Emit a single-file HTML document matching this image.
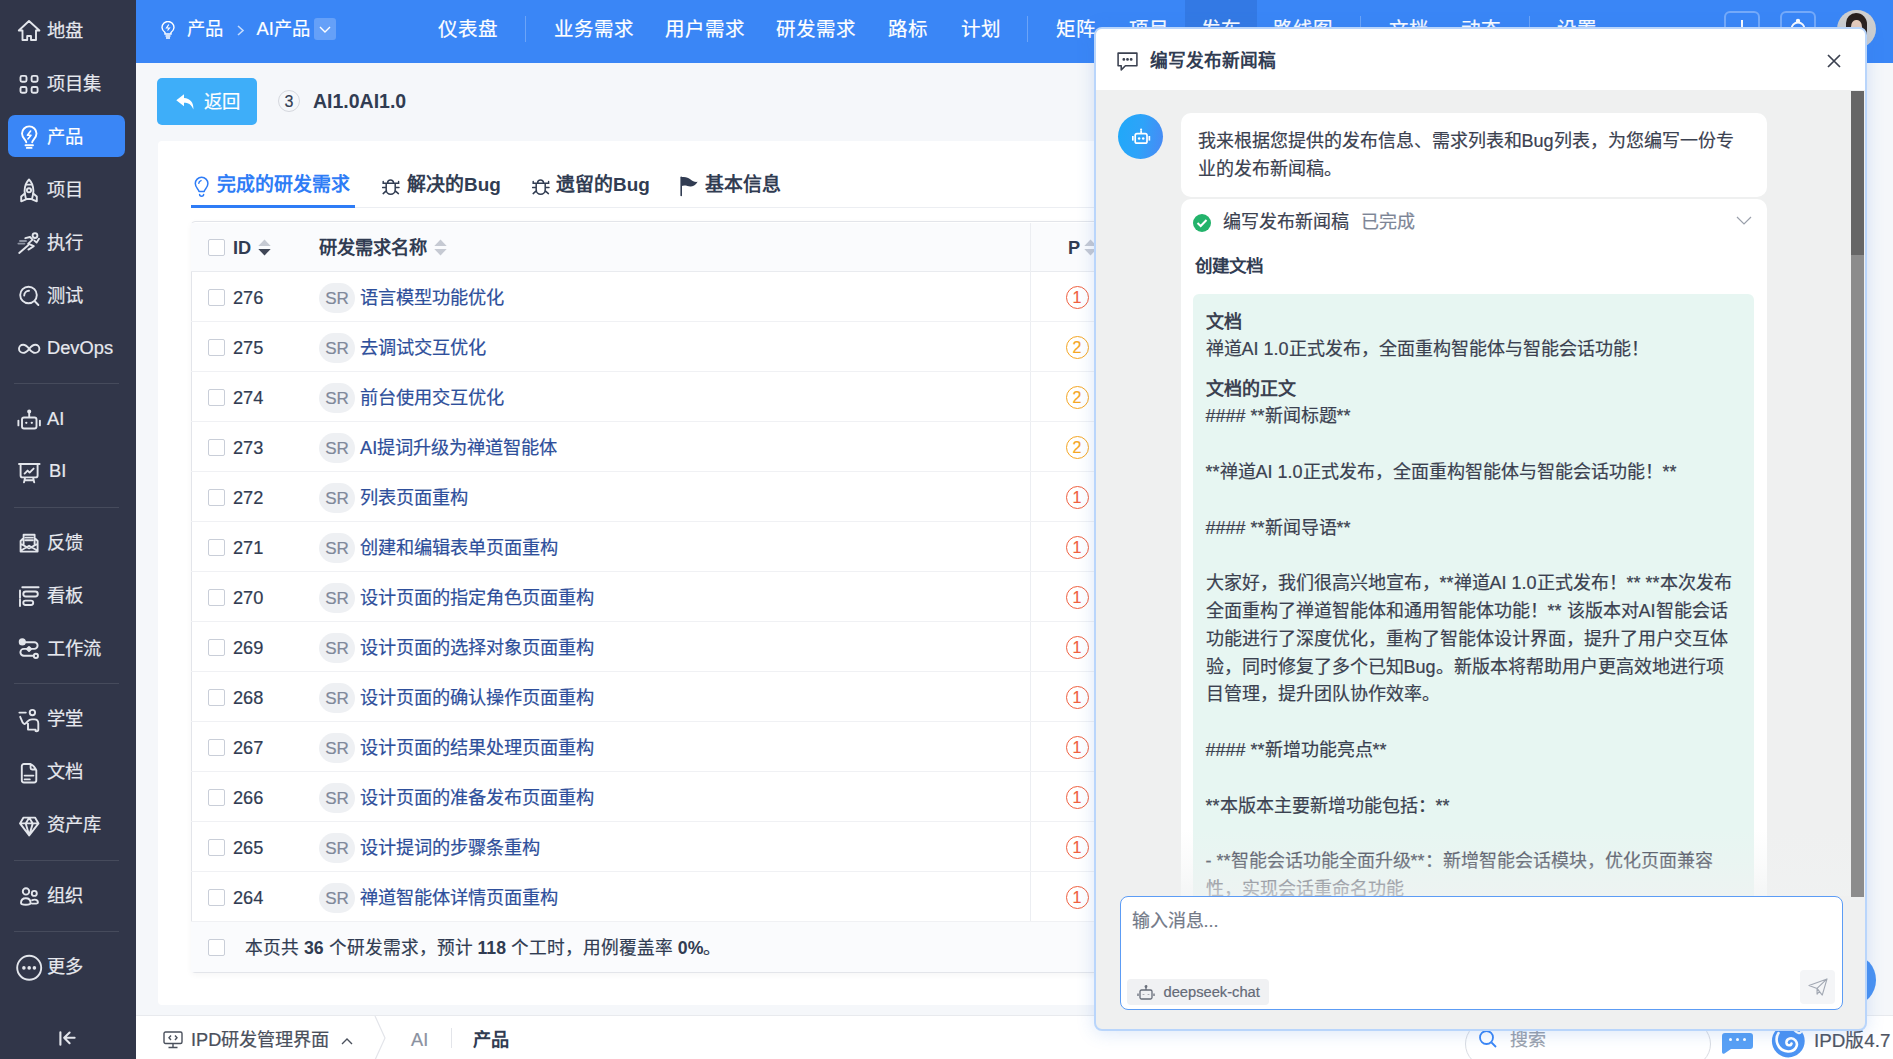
<!DOCTYPE html>
<html lang="zh-CN"><head><meta charset="utf-8">
<style>
*{box-sizing:border-box;margin:0;padding:0}
html,body{width:1893px;height:1059px;overflow:hidden}
body{font-family:"Liberation Sans",sans-serif;background:#f5f7fa;position:relative;color:#313c52;-webkit-text-stroke:0.2px currentColor}
.abs{position:absolute}
b,.tab,[style*="font-weight:bold"],[style*="font-weight:bold"] *{-webkit-text-stroke:0}
svg{display:block}
/* sidebar */
#side{position:absolute;left:0;top:0;width:136px;height:1059px;background:#313649}
.si{position:absolute;left:8px;width:117px;height:42px;color:#e6e8ee;font-size:18.3px;line-height:44px}
.si .ic{position:absolute;left:9px;top:10px;width:22px;height:22px}
.si .tx{position:absolute;left:39px;top:0}
.si.on{background:#3a86f6;border-radius:7px;color:#fff}
.sdiv{position:absolute;left:14px;width:105px;height:1px;background:#464b5c}
/* header */
#hdr{position:absolute;left:136px;top:0;width:1757px;height:63px;background:#3a86f6;color:#fff}
.nv{position:absolute;top:0;height:63px;line-height:58px;font-size:19.5px;color:#fff}
.nvd{position:absolute;top:16px;width:1px;height:26px;background:rgba(255,255,255,.25)}
/* main */
#card{position:absolute;left:158px;top:141px;width:1000px;height:864px;background:#fff;border-radius:4px}
.tab{position:absolute;top:170px;height:30px;font-size:18.9px;font-weight:bold;color:#313c52;line-height:30px}
.row{position:absolute;left:191px;width:960px;height:50px;border-bottom:1px solid #f0f1f4;font-size:18.2px;line-height:52.5px}
.cb{position:absolute;left:17px;top:17px;width:17px;height:17px;border:1px solid #c9ced8;border-radius:2px;background:#fff}
.rid{position:absolute;left:42px;color:#313c52}
.sr{position:absolute;left:128px;top:11px;width:36px;height:30px;border-radius:15px;background:#eef0f3;color:#7f889a;font-size:17px;line-height:32px;text-align:center}
.nm{position:absolute;left:169px;color:#2e4f9b}
.pri{position:absolute;left:874.5px;top:14px;width:23px;height:23px;border-radius:50%;border:1.3px solid #f0603f;color:#f0603f;font-size:16px;line-height:21px;text-align:center}
.pri.p2{border-color:#f5a623;color:#f5a623}
/* bottom bar */
#bot{position:absolute;left:136px;top:1015px;width:1757px;height:44px;background:#fff;border-top:1px solid #e8eaee}
/* chat */
#chat{position:absolute;left:1094px;top:27px;width:773px;height:1004px;border:2.5px solid #b9d5fb;border-radius:8px;background:#eff0f0;box-shadow:0 2px 18px rgba(58,120,220,.18);overflow:hidden}
#chh{position:absolute;left:-2px;top:-1px;width:772px;height:61px;background:#fff}
.md{font-size:18px;color:#3b4150;line-height:28px}
</style></head><body>

<!-- SIDEBAR -->
<div id="side">
  <div class="abs" style="left:8px;top:115px;width:117px;height:42px;background:#3a86f6;border-radius:7px"></div>
  <div class="sdiv" style="top:383px"></div>
  <div class="sdiv" style="top:507px"></div>
  <div class="sdiv" style="top:683px"></div>
  <div class="sdiv" style="top:860px"></div>
  <div class="sdiv" style="top:931px"></div>
  <svg class="abs" style="left:0;top:0" width="136" height="1059" viewBox="0 0 136 1059" fill="none" stroke="#e3e6ec" stroke-width="1.9" stroke-linecap="round" stroke-linejoin="round">
    <path d="M18.8 30.5 L29 21 L39.4 30.5 H36 V40 H31 V36 H27.2 V40 H22.5 V30.5 Z"/>
    <rect x="20.5" y="75.9" width="6" height="5.8" rx="1.5"/><rect x="31.6" y="75.9" width="6" height="5.8" rx="1.5"/><rect x="20.5" y="87" width="6" height="5.8" rx="1.5"/><rect x="31.6" y="87" width="6" height="5.8" rx="1.5"/>
    <g stroke="#fff"><path d="M26.3 142.3 C26.3 139.8 22 138.3 22 133.6 A7.25 7.25 0 1 1 36.5 133.6 C36.5 138.3 32.2 139.8 32.2 142.3"/><path d="M25.5 145.2 H33 M26.8 147.9 H31.6"/><path d="M30.6 131 L27.4 135.2 H31 L27.9 139" stroke-width="1.6"/></g>
    <path d="M29 179.5 C25.6 183 24.6 187 24.6 191 C24.6 194 25.4 196.8 26 199 H32 C32.6 196.8 33.4 194 33.4 191 C33.4 187 32.4 183 29 179.5 Z"/><path d="M25.9 184.6 H32.1"/><circle cx="29" cy="190.3" r="2.1"/><path d="M24.8 193.6 L21.2 196.6 V201.3 L26 199.3 M33.2 193.6 L36.8 196.6 V201.3 L32 199.3"/>
    <circle cx="35" cy="235.6" r="2.4"/><path d="M25.3 238.2 L30 237 L32.6 239.6 L28.2 243.6 L33.8 246.2 L28.4 249.6 M34.4 240.6 L36.6 242.6 L39 238.8 M28.2 245.2 L19.2 253"/><path d="M20 241 H26 M18.4 243.6 H24.4" stroke="#8d93a2"/>
    <circle cx="28.5" cy="295" r="8.3"/><path d="M35 301.5 L38.4 305 M24.2 295.6 A4.9 4.9 0 0 1 29 290.8"/>
    <path d="M29.2 348.8 C27 346 25.6 344.7 23.1 344.7 A4.1 4.1 0 0 0 23.1 352.9 C25.6 352.9 27 351.6 29.2 348.8 C31.4 346 32.8 344.7 35.3 344.7 A4.1 4.1 0 0 1 35.3 352.9 C32.8 352.9 31.4 351.6 29.2 348.8 Z"/>
    <rect x="22" y="417.5" width="14.5" height="11" rx="2"/><path d="M29.2 412.5 V417 M18.4 420.6 V425.4 M39.9 420.6 V425.4"/><circle cx="29.2" cy="411.5" r="1.1" fill="#e3e6ec"/><circle cx="26.3" cy="422.8" r="1.15" fill="#e3e6ec" stroke="none"/><circle cx="31.8" cy="422.8" r="1.15" fill="#e3e6ec" stroke="none"/>
    <path d="M19 464 H39.6 M20.6 464 V475.4 A2 2 0 0 0 22.6 477.4 H35.6 A2 2 0 0 0 37.6 475.4 V464 M24.6 473.6 L27.6 470.6 L29.6 472.6 L33.6 468.6 M25 478 L24 482.4 M33.2 478 L34.2 482.4 M25 480.2 H33.2"/>
    <path d="M22.6 539 L20.6 541 V551.6 H37.6 V541 L35.6 539 M23.6 545.4 V534.8 H34.6 V545.4 M25.6 537.6 H32.6 M25.6 540.3 H32.6 M21 544 L29.1 548.4 L37.2 544 M22.2 549.8 L29.1 545.8 L36 549.8"/>
    <path d="M22.3 587.3 H38.6 M20 590.5 V597.8 M20 599.4 V606"/><rect x="23.3" y="591.5" width="14.5" height="5" rx="2.5"/><rect x="23.3" y="600.6" width="9.9" height="4.4" rx="2.2"/>
    <circle cx="22.3" cy="641.9" r="2.6" fill="#e3e6ec"/><path d="M24.2 642.3 H34.3 A3.3 3.3 0 0 1 34.3 648.9 H23.8 A3.4 3.4 0 0 0 23.8 655.7 H33.6"/><circle cx="35.9" cy="655.9" r="2.1"/><path d="M29 646.9 L31.1 649 L29 651.1 L26.9 649 Z" fill="#e3e6ec"/>
    <circle cx="32.4" cy="712.6" r="2.7"/><path d="M19.4 712.6 H25.8 M20.2 716.8 L22.8 722.8 Q24.4 725 26 723.2 L27.6 721.4 Q29.4 719.4 32 719.4 H34.4 Q38.3 719.4 38.3 723.6 V729.4 Q38.3 731.2 36.5 731.2 M28 723.6 V729.6 H35.6 V731"/>
    <path d="M30.6 764 H24 A2.2 2.2 0 0 0 21.8 766.2 V780.3 A2.2 2.2 0 0 0 24 782.5 H34.1 A2.2 2.2 0 0 0 36.3 780.3 V770.4 Q34.6 766 30.6 764 Z M30.6 764.6 V768 A1.5 1.5 0 0 0 32.1 769.5 H36 M24.6 775.6 H33.4 M24.6 779.4 H29.8"/>
    <path d="M23.5 817.6 H35 L38.5 823.4 L29.2 835.4 L20 823.4 Z M20 823.4 H38.5 M29.2 817.8 L25.7 823.4 L29.2 835.2 L32.8 823.4 Z"/>
    <circle cx="26" cy="891.4" r="3.2"/><circle cx="34.3" cy="893.4" r="2.5"/><path d="M21 903 C21 900 23 898.2 25.8 898.2 C28.6 898.2 30.6 900 30.6 903 C30.6 904.3 28.6 904.7 25.8 904.7 C23 904.7 21 904.3 21 903 Z M32.2 900.2 C33 899.8 33.6 899.6 34.6 899.6 C36.6 899.6 37.9 901 37.9 902.4 C37.9 903.3 36.6 903.6 34.6 903.6 H32"/>
    <circle cx="29.2" cy="967.8" r="12"/><circle cx="23.9" cy="967.9" r="1.8" fill="#e3e6ec" stroke="none"/><circle cx="29.2" cy="967.9" r="1.8" fill="#e3e6ec" stroke="none"/><circle cx="34.4" cy="967.9" r="1.8" fill="#e3e6ec" stroke="none"/>
    <path d="M60.4 1032.2 V1044.8 M69.6 1032.6 L64.2 1037.8 L69.6 1043.2 M64.6 1037.8 H74.6" stroke-width="2.1"/>
  </svg>
  <div class="si" style="top:9px"><span class="tx">地盘</span></div>
  <div class="si" style="top:62px"><span class="tx">项目集</span></div>
  <div class="si on" style="top:115px;background:none"><span class="tx">产品</span></div>
  <div class="si" style="top:168px"><span class="tx">项目</span></div>
  <div class="si" style="top:221px"><span class="tx">执行</span></div>
  <div class="si" style="top:274px"><span class="tx">测试</span></div>
  <div class="si" style="top:326px"><span class="tx">DevOps</span></div>
  <div class="si" style="top:397px"><span class="tx">AI</span></div>
  <div class="si" style="top:449px"><span class="tx" style="left:41px">BI</span></div>
  <div class="si" style="top:521px"><span class="tx">反馈</span></div>
  <div class="si" style="top:574px"><span class="tx">看板</span></div>
  <div class="si" style="top:627px"><span class="tx">工作流</span></div>
  <div class="si" style="top:697px"><span class="tx">学堂</span></div>
  <div class="si" style="top:750px"><span class="tx">文档</span></div>
  <div class="si" style="top:803px"><span class="tx">资产库</span></div>
  <div class="si" style="top:874px"><span class="tx">组织</span></div>
  <div class="si" style="top:945px"><span class="tx">更多</span></div>
</div>

<!-- HEADER -->
<div id="hdr">
  <svg class="abs" style="left:25px;top:21px" width="14" height="18" viewBox="0 0 14 18" fill="none" stroke="#fff" stroke-width="1.4"><path d="M4 11.5 C2 10 1 8.5 1 6.5 A6 6 0 0 1 13 6.5 C13 8.5 12 10 10 11.5 V13 H4 Z M4.5 15 H9.5 M5 17 H9"/><path d="M7.8 3.5 L5.5 7 H8.5 L6.5 9.5" stroke-width="1.2"/></svg>
  <div class="nv" style="left:50.5px;font-size:18.3px">产品</div>
  <svg class="abs" style="left:100px;top:25px" width="9" height="11" viewBox="0 0 9 11" fill="none" stroke="rgba(255,255,255,.7)" stroke-width="1.6"><path d="M2 1 L7 5.5 L2 10"/></svg>
  <div class="nv" style="left:120.5px;font-size:18.3px">AI产品</div>
  <div class="abs" style="left:178px;top:18px;width:22px;height:22px;background:rgba(255,255,255,.22);border-radius:3px"><svg class="abs" style="left:5px;top:8px" width="12" height="7" viewBox="0 0 12 7" fill="none" stroke="#fff" stroke-width="1.4"><path d="M1 1 L6 6 L11 1"/></svg></div>

  <div class="nv" style="left:302px">仪表盘</div>
  <div class="nvd" style="left:389px"></div>
  <div class="nv" style="left:418px">业务需求</div>
  <div class="nv" style="left:529px">用户需求</div>
  <div class="nv" style="left:640px">研发需求</div>
  <div class="nv" style="left:752px">路标</div>
  <div class="nv" style="left:825px">计划</div>
  <div class="nvd" style="left:891px"></div>
  <div class="nv" style="left:920px">矩阵</div>
  <div class="nv" style="left:992.5px">项目</div>
  <div class="abs" style="left:1049px;top:0;width:72px;height:63px;background:#3379e4"></div>
  <div class="nv" style="left:1065px">发布</div>
  <div class="nv" style="left:1137px">路线图</div>
  <div class="nvd" style="left:1224px"></div>
  <div class="nv" style="left:1252.5px">文档</div>
  <div class="nv" style="left:1325px">动态</div>
  <div class="nvd" style="left:1392.5px"></div>
  <div class="nv" style="left:1421px">设置</div>
  <div class="abs" style="left:1588px;top:11px;width:36px;height:38px;border:2px solid rgba(255,255,255,.3);border-radius:6px"><div class="abs" style="left:15px;top:7px;width:2.2px;height:18px;background:#fff"></div><div class="abs" style="left:7px;top:15px;width:18px;height:2.2px;background:#fff"></div></div>
  <div class="abs" style="left:1644px;top:11px;width:36px;height:38px;border:2px solid rgba(255,255,255,.3);border-radius:6px"><svg class="abs" style="left:6px;top:5px" width="20" height="24" viewBox="0 0 20 24" fill="none" stroke="#fff" stroke-width="2"><circle cx="10" cy="3" r="1.2" fill="#fff"/><path d="M3.5 17 V11 A6.5 6.5 0 0 1 16.5 11 V17 M1.5 17.5 H18.5 M8 21 H12"/></svg></div>
  <div class="abs" style="left:1701px;top:9.5px;width:38.5px;height:38.5px;border-radius:50%;background:#cfcfcf;overflow:hidden">
    <div class="abs" style="left:9px;top:3px;width:21px;height:40px;border-radius:10px 11px 2px 2px;background:#2a201c"></div>
    <div class="abs" style="left:14px;top:10px;width:11px;height:15px;border-radius:45% 45% 50% 50%;background:#e9cdbb"></div>
    <div class="abs" style="left:13px;top:23px;width:13px;height:20px;background:#e9cdbb;border-radius:3px"></div>
  </div>
</div>

<!-- MAIN -->
<div class="abs" style="left:157px;top:78px;width:100px;height:47px;background:#3eaef9;border-radius:5px">
  <svg class="abs" style="left:19px;top:16px" width="18" height="16" viewBox="0 0 18 16" fill="#fff"><path d="M8 0.3 L0.3 6.3 L8 12.3 V8.8 C12 8.8 15.3 10 17.4 15.6 C17.8 8.6 14 4.3 8 4.1 Z"/></svg>
  <div class="abs" style="left:46.5px;top:0;line-height:47px;font-size:18.3px;color:#fff">返回</div>
</div>
<div class="abs" style="left:278px;top:90px;width:22px;height:22px;border:1px solid #d5d8de;border-radius:50%;font-size:16px;line-height:21px;text-align:center;color:#313c52">3</div>
<div class="abs" style="left:313px;top:88px;font-size:19.5px;font-weight:bold;line-height:26px;color:#313c52">AI1.0AI1.0</div>

<div id="card"></div>
<div class="abs" style="left:191px;top:207px;width:910px;height:1px;background:#eceef2"></div>
<div class="abs" style="left:191px;top:205px;width:164px;height:3px;background:#2e7cf6"></div>
<div class="tab" style="left:193px;color:#2e7cf6"><svg class="abs" style="left:-1px;top:0" width="20" height="30" viewBox="192 170 20 30" fill="none" stroke="#2e7cf6" stroke-width="1.5" stroke-linecap="round" stroke-linejoin="round"><path d="M199 191.6 C199 189.4 195.3 188 195.3 183.6 A6.3 6.3 0 1 1 207.9 183.6 C207.9 188 204.2 189.4 204.2 191.6 Z M199.6 194.6 A2 1.6 0 0 0 203.6 194.6 M198.8 183.3 A3 3 0 0 1 201 180.6"/></svg><span style="position:absolute;left:24px;white-space:nowrap">完成的研发需求</span></div>
<div class="tab" style="left:380px"><svg class="abs" style="left:2px;top:0" width="22" height="30" viewBox="382 170 22 30" fill="none" stroke="#313c52" stroke-width="1.5" stroke-linecap="round"><path d="M387.6 183 A3 3 0 0 1 393.6 183 M383.2 181.6 V183.3 H398.6 V181.6 M386.2 183.3 V189.8 A4.5 4.5 0 0 0 395.2 189.8 V183.3 M382.6 187.5 H386.2 M395.2 187.5 H399 M386.4 190.6 L383.2 193.6 M395 190.6 L398.4 193.6"/></svg><span style="position:absolute;left:27px;white-space:nowrap">解决的Bug</span></div>
<div class="tab" style="left:529px"><svg class="abs" style="left:2.5px;top:0" width="22" height="30" viewBox="382 170 22 30" fill="none" stroke="#313c52" stroke-width="1.5" stroke-linecap="round"><path d="M387.6 183 A3 3 0 0 1 393.6 183 M383.2 181.6 V183.3 H398.6 V181.6 M386.2 183.3 V189.8 A4.5 4.5 0 0 0 395.2 189.8 V183.3 M382.6 187.5 H386.2 M395.2 187.5 H399 M386.4 190.6 L383.2 193.6 M395 190.6 L398.4 193.6"/></svg><span style="position:absolute;left:27px;white-space:nowrap">遗留的Bug</span></div>
<div class="tab" style="left:679px"><svg class="abs" style="left:-2px;top:0" width="22" height="30" viewBox="677 170 22 30"><path d="M681.2 177.4 V195.4" stroke="#313c52" stroke-width="1.6" stroke-linecap="round"/><path d="M681 177.3 C685 176.4 688 177.4 690.6 179.4 C692.6 181.2 694.8 182.2 697.6 181.8 C696.2 184.6 693.6 186.9 690.2 186.5 C687.4 186.1 684.8 184.6 681 186.2 Z" fill="#313c52"/></svg><span style="position:absolute;left:26px;white-space:nowrap">基本信息</span></div>

<!-- table -->
<div class="abs" style="left:191px;top:221px;width:960px;height:752px;border:1px solid #e3e5ea;border-radius:4px;background:#fff;box-shadow:0 2px 6px rgba(0,0,0,.04)"></div>
<div class="row" style="top:223px;height:49px;left:191px;line-height:50px;background:#fafbfd;font-weight:bold;border-bottom:1px solid #e9ebef">
  <div class="cb" style="top:16px"></div>
  <div class="rid" style="left:42px">ID</div>
  <svg class="abs" style="left:66.5px;top:16px" width="13" height="17" viewBox="0 0 13 17"><path d="M0.3 7 L6.5 0.5 L12.7 7 Z" fill="#c6cad3"/><path d="M0.3 10 L6.5 16.5 L12.7 10 Z" fill="#3f4656"/></svg>
  <div class="rid" style="left:128px">研发需求名称</div>
  <svg class="abs" style="left:243px;top:16px" width="13" height="17" viewBox="0 0 13 17"><path d="M0.3 7 L6.5 0.5 L12.7 7 Z" fill="#c6cad3"/><path d="M0.3 10 L6.5 16.5 L12.7 10 Z" fill="#c6cad3"/></svg>
  <div class="rid" style="left:877px">P</div>
  <svg class="abs" style="left:893px;top:16px" width="13" height="17" viewBox="0 0 13 17"><path d="M0.3 7 L6.5 0.5 L12.7 7 Z" fill="#c6cad3"/><path d="M0.3 10 L6.5 16.5 L12.7 10 Z" fill="#c6cad3"/></svg>
</div>
<div class="abs" style="left:1030px;top:223px;width:1px;height:699px;background:#eceef2"></div>
<div class="row" style="top:272px"><div class="cb"></div><div class="rid">276</div><div class="sr">SR</div><div class="nm">语言模型功能优化</div><div class="pri">1</div></div>
<div class="row" style="top:322px"><div class="cb"></div><div class="rid">275</div><div class="sr">SR</div><div class="nm">去调试交互优化</div><div class="pri p2">2</div></div>
<div class="row" style="top:372px"><div class="cb"></div><div class="rid">274</div><div class="sr">SR</div><div class="nm">前台使用交互优化</div><div class="pri p2">2</div></div>
<div class="row" style="top:422px"><div class="cb"></div><div class="rid">273</div><div class="sr">SR</div><div class="nm">AI提词升级为禅道智能体</div><div class="pri p2">2</div></div>
<div class="row" style="top:472px"><div class="cb"></div><div class="rid">272</div><div class="sr">SR</div><div class="nm">列表页面重构</div><div class="pri">1</div></div>
<div class="row" style="top:522px"><div class="cb"></div><div class="rid">271</div><div class="sr">SR</div><div class="nm">创建和编辑表单页面重构</div><div class="pri">1</div></div>
<div class="row" style="top:572px"><div class="cb"></div><div class="rid">270</div><div class="sr">SR</div><div class="nm">设计页面的指定角色页面重构</div><div class="pri">1</div></div>
<div class="row" style="top:622px"><div class="cb"></div><div class="rid">269</div><div class="sr">SR</div><div class="nm">设计页面的选择对象页面重构</div><div class="pri">1</div></div>
<div class="row" style="top:672px"><div class="cb"></div><div class="rid">268</div><div class="sr">SR</div><div class="nm">设计页面的确认操作页面重构</div><div class="pri">1</div></div>
<div class="row" style="top:722px"><div class="cb"></div><div class="rid">267</div><div class="sr">SR</div><div class="nm">设计页面的结果处理页面重构</div><div class="pri">1</div></div>
<div class="row" style="top:772px"><div class="cb"></div><div class="rid">266</div><div class="sr">SR</div><div class="nm">设计页面的准备发布页面重构</div><div class="pri">1</div></div>
<div class="row" style="top:822px"><div class="cb"></div><div class="rid">265</div><div class="sr">SR</div><div class="nm">设计提词的步骤条重构</div><div class="pri">1</div></div>
<div class="row" style="top:872px"><div class="cb"></div><div class="rid">264</div><div class="sr">SR</div><div class="nm">禅道智能体详情页面重构</div><div class="pri">1</div></div>

<div class="row" style="top:922px;border-bottom:none;background:#fafbfd">
  <div class="cb"></div>
  <div class="abs" style="left:54px;font-size:17.7px;white-space:nowrap">本页共 <b>36</b> 个研发需求，预计 <b>118</b> 个工时，用例覆盖率 <b>0%</b>。</div>
</div>

<!-- BOTTOM -->
<div id="bot">
  <svg class="abs" style="left:27px;top:15px" width="20" height="18" viewBox="0 0 20 18" fill="none" stroke="#4a505c" stroke-width="1.4"><rect x="1" y="1" width="18" height="11.5" rx="1.5"/><path d="M10 12.5 V16.5 M5.5 16.5 H14.5 M8 4.5 L6 6.8 L8 9 M12 4.5 L14 6.8 L12 9"/></svg>
  <div class="abs" style="left:55px;top:2px;line-height:44px;font-size:18.2px;color:#4a505c;white-space:nowrap">IPD研发管理界面</div>
  <svg class="abs" style="left:205px;top:21px" width="12" height="8" viewBox="0 0 12 8" fill="none" stroke="#4a505c" stroke-width="1.4"><path d="M1 7 L6 2 L11 7"/></svg>
  <svg class="abs" style="left:237px;top:0" width="14" height="44" viewBox="0 0 14 44" fill="none" stroke="#e3e5ea" stroke-width="1.2"><path d="M2 0 L12 22 L2 44"/></svg>
  <div class="abs" style="left:275px;top:2px;line-height:44px;font-size:18.2px;color:#8a91a0">AI</div>
  <div class="abs" style="left:315px;top:12px;width:1px;height:20px;background:#e3e5ea"></div>
  <div class="abs" style="left:337px;top:2px;line-height:44px;font-size:18.2px;font-weight:bold;color:#313c52">产品</div>
  <div class="abs" style="left:1329px;top:5px;width:246px;height:46px;border:1px solid #d9dce2;border-radius:23px;background:#fff"></div>
  <svg class="abs" style="left:1342px;top:13px" width="20" height="20" viewBox="0 0 20 20" fill="none" stroke="#3a86f6" stroke-width="1.8"><circle cx="8.5" cy="8.5" r="6.5"/><path d="M13.5 13.5 L18 18"/></svg>
  <div class="abs" style="left:1374px;top:0;line-height:48px;font-size:18px;color:#9aa1ad">搜索</div>
  <svg class="abs" style="left:1585px;top:16px" width="33" height="24" viewBox="0 0 33 24"><path d="M4 1 H29 A3 3 0 0 1 32 4 V14 A3 3 0 0 1 29 17 H10 L3.5 21.5 Q1 22.5 1 20 V4 A3 3 0 0 1 4 1 Z" fill="#58a0f5"/><circle cx="9.5" cy="7.5" r="1.5" fill="#fff"/><circle cx="16.5" cy="7.5" r="1.5" fill="#fff"/><circle cx="23.5" cy="7.5" r="1.5" fill="#fff"/></svg>
  <svg class="abs" style="left:1635px;top:8px" width="34" height="36" viewBox="0 0 34 36"><circle cx="17.3" cy="17" r="16.4" fill="#4d94f3"/><path d="M7.5 9 C3.5 15 6 27 17 27.5 C24.5 27.8 28 21 24.5 16.5 C21.5 12.8 15 14 15.5 19 C16 22 20 22 20.5 19.5" fill="none" stroke="#fff" stroke-width="2.6" stroke-linecap="round"/><path d="M23 6 C26 9 29 10 30 8" fill="none" stroke="#fff" stroke-width="2.2" stroke-linecap="round"/></svg>
  <div class="abs" style="left:1678px;top:0;line-height:49px;font-size:18.8px;color:#4f5562;white-space:nowrap">IPD版4.7</div>
</div>

<!-- floating ai button behind chat -->
<div class="abs" style="left:1830px;top:955px;width:46px;height:50px;border-radius:50%;background:#4a92f2"></div>

<!-- CHAT -->
<div id="chat"><div class="abs" style="left:1.5px;top:1px;width:770px;height:1000px">
  <div id="chh">
    <svg class="abs" style="left:20px;top:21.5px" width="23" height="21" viewBox="0 0 22 20" fill="none" stroke="#3b4150" stroke-width="1.5" stroke-linejoin="round"><path d="M2 2 H20 V14 H9 L5 18 V14 H2 Z"/><circle cx="7.5" cy="8" r=".6" fill="#3b4150"/><circle cx="11" cy="8" r=".6" fill="#3b4150"/><circle cx="14.5" cy="8" r=".6" fill="#3b4150"/></svg>
    <div class="abs" style="left:54px;top:17px;font-size:17.7px;font-weight:bold;line-height:30px;color:#313c52">编写发布新闻稿</div>
    <svg class="abs" style="left:730px;top:24px" width="16" height="16" viewBox="0 0 16 16" fill="none" stroke="#3b4150" stroke-width="1.7"><path d="M2 2 L14 14 M14 2 L2 14"/></svg>
  </div>
  <!-- scrollbar -->
  <div class="abs" style="left:753px;top:61px;width:13px;height:806px;background:#8c8c8c"></div>
  <div class="abs" style="left:753px;top:61px;width:13px;height:164px;background:#666"></div>
  <!-- avatar -->
  <div class="abs" style="left:20px;top:83.5px;width:45px;height:45px;border-radius:50%;background:linear-gradient(100deg,#1fa9f9 0%,#2ea3f9 50%,#4a88f4 100%)">
    <svg class="abs" style="left:7px;top:5.5px" width="32" height="32" viewBox="1125 120 32 32" fill="none" stroke="#fff" stroke-width="1.7"><rect x="1135.2" y="134.6" width="11.8" height="9.6" rx="1.8"/><path d="M1141.1 134.6 V131.4"/><circle cx="1141.1" cy="130.6" r="1.1" fill="#fff" stroke="none"/><rect x="1132" y="137" width="1.7" height="4.6" fill="#fff" stroke="none"/><rect x="1148.5" y="137" width="1.7" height="4.6" fill="#fff" stroke="none"/><circle cx="1139.1" cy="139.4" r="1.25" fill="#fff" stroke="none"/><circle cx="1143.2" cy="139.4" r="1.25" fill="#fff" stroke="none"/></svg>
  </div>
  <!-- bubble -->
  <div class="abs" style="left:83px;top:83px;width:586px;height:84px;background:#fff;border-radius:10px"></div>
  <div class="abs md" style="left:100px;top:97px;width:548px">我来根据您提供的发布信息、需求列表和Bug列表，为您编写一份专业的发布新闻稿。</div>
  <!-- card -->
  <div class="abs" style="left:83px;top:169px;width:586px;height:720px;background:#fff;border-radius:10px"></div>
  <svg class="abs" style="left:94px;top:182.5px" width="20" height="20" viewBox="0 0 20 20"><circle cx="10" cy="10" r="9" fill="#23b36b"/><path d="M5.5 10 L8.7 13 L14.5 7" fill="none" stroke="#fff" stroke-width="2"/></svg>
  <div class="abs" style="left:125px;top:178px;font-size:18px;line-height:28px;color:#3b4150">编写发布新闻稿</div>
  <div class="abs" style="left:263.5px;top:178px;font-size:18px;line-height:28px;color:#7d8596">已完成</div>
  <svg class="abs" style="left:638px;top:186px" width="16" height="10" viewBox="0 0 16 10" fill="none" stroke="#9aa0ab" stroke-width="1.2"><path d="M1 1 L8 8 L15 1"/></svg>
  <div class="abs" style="left:97px;top:222px;font-size:17.5px;font-weight:bold;line-height:28px;color:#313c52">创建文档</div>
  <div class="abs" style="left:95px;top:264px;width:561px;height:620px;background:#e7f6f2;border-radius:6px"></div>
  <div class="abs md" style="left:108px;top:278.5px;width:534px;line-height:27.8px">
    <div style="font-weight:bold">文档</div>
    <div>禅道AI 1.0正式发布，全面重构智能体与智能会话功能！</div>
    <div style="font-weight:bold;margin-top:11.5px">文档的正文</div>
    <div>#### **新闻标题**</div>
    <div>&nbsp;</div>
    <div>**禅道AI 1.0正式发布，全面重构智能体与智能会话功能！**</div>
    <div>&nbsp;</div>
    <div>#### **新闻导语**</div>
    <div>&nbsp;</div>
    <div>大家好，我们很高兴地宣布，**禅道AI 1.0正式发布！** **本次发布全面重构了禅道智能体和通用智能体功能！** 该版本对AI智能会话功能进行了深度优化，重构了智能体设计界面，提升了用户交互体验，同时修复了多个已知Bug。新版本将帮助用户更高效地进行项目管理，提升团队协作效率。</div>
    <div>&nbsp;</div>
    <div>#### **新增功能亮点**</div>
    <div>&nbsp;</div>
    <div>**本版本主要新增功能包括：**</div>
    <div>&nbsp;</div>
    <div>- **智能会话功能全面升级**：新增智能会话模块，优化页面兼容性，实现会话重命名功能</div>
  </div>
  <!-- fade -->
  <div class="abs" style="left:82px;top:800px;width:670px;height:66px;background:linear-gradient(rgba(240,242,242,0),rgba(240,242,242,.3) 50%,rgba(240,242,242,.72))"></div>
  <!-- input -->
  <div class="abs" style="left:22px;top:866px;width:723px;height:113.5px;background:#fff;border:1.5px solid #5c9cf5;border-radius:8px">
    <div class="abs" style="left:11px;top:10px;font-size:18px;line-height:28px;color:#737a88">输入消息...</div>
    <div class="abs" style="left:6px;top:82px;width:142px;height:26px;background:#f0f1f3;border-radius:4px">
      <svg class="abs" style="left:10px;top:5px" width="18" height="17" viewBox="0 0 18 17" fill="none" stroke="#666c78" stroke-width="1.3"><rect x="3" y="6" width="12" height="9" rx="1.5"/><path d="M9 6 V3 M1 9.5 V12 M17 9.5 V12"/><circle cx="9" cy="2.5" r=".8"/><path d="M6.5 10.5 V11 M11.5 10.5 V11" stroke-width="1.8"/></svg>
      <div class="abs" style="left:37px;top:0;line-height:26px;font-size:14.7px;color:#646a77">deepseek-chat</div>
    </div>
    <div class="abs" style="left:679px;top:73px;width:35px;height:34px;background:#f4f5f7;border-radius:4px">
      <svg class="abs" style="left:8px;top:8px" width="20" height="18" viewBox="0 0 21 19" fill="none" stroke="#a2a8b3" stroke-width="1.2" stroke-linejoin="round"><path d="M1 8 L20 1 L15 18 L9.5 11 Z M9.5 11 L20 1 M9.5 11 V17 L12 14"/></svg>
    </div>
  </div>
</div></div>

</body></html>
